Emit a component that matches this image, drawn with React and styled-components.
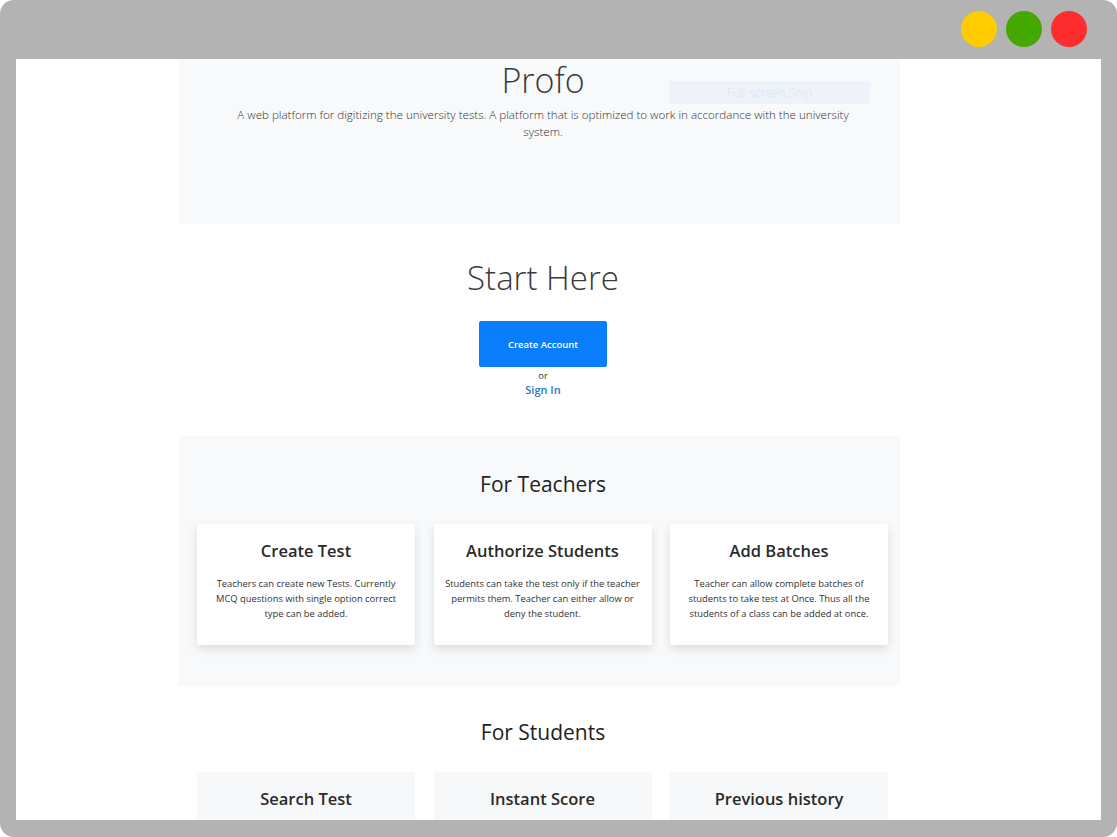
import React from "react";
import styled, { createGlobalStyle } from "styled-components";

const Global = createGlobalStyle`
  html, body { margin: 0; padding: 0; background: #ffffff; }
  body { font-family: "Open Sans", "Noto Sans", sans-serif; color: #212529; }
  * { box-sizing: border-box; }
`;

const Frame = styled.div`
  width: 1117px;
  height: 837px;
  background: #b3b3b3;
  border-radius: 14px;
  padding: 59px 16px 17px 16px;
  position: relative;
  display: flex;
`;

const Dots = styled.div`
  position: absolute;
  top: 11px;
  right: 30px;
  display: flex;
  gap: 9px;
`;

const Dot = styled.span`
  width: 36px;
  height: 36px;
  border-radius: 50%;
  background: ${(p) => p.$color};
`;

const Viewport = styled.div`
  flex: 1;
  background: #ffffff;
  overflow: hidden;
  padding-left: 163px;
`;

const Column = styled.div`
  width: 721px;
  display: flex;
  flex-direction: column;
`;

const Hero = styled.section`
  position: relative;
  background: #f8f9fa;
  height: 165px;
  display: flex;
  flex-direction: column;
  align-items: center;
  padding: 2px 11px 0 18px;
`;

const Title = styled.h1`
  margin: 0;
  font-weight: 300;
  font-size: 34px;
  line-height: 38px;
  color: #3a3a3a;
`;

const Lead = styled.p`
  margin: 7px 0 0;
  max-width: 630px;
  text-align: center;
  font-weight: 300;
  font-size: 11.6px;
  line-height: 17px;
  color: #333;
`;

const Snip = styled.div`
  position: absolute;
  left: 490px;
  top: 22px;
  width: 201px;
  height: 23px;
  background: #eef3fa;
  color: #d9e3f0;
  font-size: 12px;
  font-weight: 300;
  display: flex;
  align-items: center;
  justify-content: center;
`;

const Start = styled.section`
  height: 212px;
  display: flex;
  flex-direction: column;
  align-items: center;
  padding: 33px 11px 0 18px;
`;

const BigHeading = styled.h2`
  margin: 0;
  font-weight: 300;
  font-size: 33px;
  line-height: 42px;
  color: #3a3a3a;
`;

const PrimaryButton = styled.button`
  margin-top: 22px;
  width: 128px;
  height: 46px;
  border: none;
  border-radius: 2px;
  background: #0a7dfb;
  color: #ffffff;
  font-family: "Open Sans", "Noto Sans", sans-serif;
  font-size: 9.5px;
  font-weight: 600;
`;

const Or = styled.div`
  margin-top: 2px;
  font-size: 9.5px;
  line-height: 13px;
  color: #333;
`;

const SignIn = styled.a`
  font-size: 11px;
  line-height: 15px;
  font-weight: 600;
  color: #2a78c9;
  text-decoration: none;
`;

const FeatureSection = styled.section`
  background: ${(p) => (p.$gray ? "#f8f9fa" : "#ffffff")};
  height: ${(p) => p.$height}px;
  display: flex;
  flex-direction: column;
  align-items: center;
  padding: ${(p) => p.$top}px 11px 0 18px;
`;

const SectionHeading = styled.h3`
  margin: 0;
  font-weight: 400;
  font-size: 21px;
  line-height: 28px;
  color: #222;
`;

const CardRow = styled.div`
  margin-top: 26px;
  align-self: stretch;
  display: grid;
  grid-template-columns: repeat(3, 218px);
  column-gap: 18.5px;
`;

const Card = styled.div`
  background: ${(p) => (p.$muted ? "#f7f8f9" : "#ffffff")};
  height: 121px;
  border-radius: 2px;
  box-shadow: ${(p) => (p.$muted ? "none" : "0 4px 10px rgba(0,0,0,0.12)")};
  display: flex;
  flex-direction: column;
  align-items: center;
  padding: 14px 10px 0;
`;

const CardTitle = styled.h4`
  margin: 0;
  font-weight: 600;
  font-size: 16.5px;
  line-height: 26px;
  color: #2a2a2a;
`;

const CardText = styled.p`
  margin: 12px 0 0;
  text-align: center;
  font-size: 9.4px;
  line-height: 15px;
  color: #333;
`;

const teachers = [
  {
    title: "Create Test",
    text: "Teachers can create new Tests. Currently MCQ questions with single option correct type can be added.",
  },
  {
    title: "Authorize Students",
    text: "Students can take the test only if the teacher permits them. Teacher can either allow or deny the student.",
  },
  {
    title: "Add Batches",
    text: "Teacher can allow complete batches of students to take test at Once. Thus all the students of a class can be added at once.",
  },
];

const students = ["Search Test", "Instant Score", "Previous history"];

export default function App() {
  return (
    <>
      <Global />
      <Frame>
        <Dots>
          <Dot $color="#ffcc00" />
          <Dot $color="#44a800" />
          <Dot $color="#ff2d2d" />
        </Dots>
        <Viewport>
          <Column>
            <Hero>
              <Title>Profo</Title>
              <Lead>
                A web platform for digitizing the university tests. A platform that is optimized to work in accordance with the university system.
              </Lead>
              <Snip>Full-screen Snip</Snip>
            </Hero>
            <Start>
              <BigHeading>Start Here</BigHeading>
              <PrimaryButton>Create Account</PrimaryButton>
              <Or>or</Or>
              <SignIn href="#">Sign In</SignIn>
            </Start>
            <FeatureSection $gray $height={250} $top={34}>
              <SectionHeading>For Teachers</SectionHeading>
              <CardRow>
                {teachers.map((c) => (
                  <Card key={c.title}>
                    <CardTitle>{c.title}</CardTitle>
                    <CardText>{c.text}</CardText>
                  </Card>
                ))}
              </CardRow>
            </FeatureSection>
            <FeatureSection $height={250} $top={32}>
              <SectionHeading>For Students</SectionHeading>
              <CardRow>
                {students.map((t) => (
                  <Card key={t} $muted>
                    <CardTitle>{t}</CardTitle>
                  </Card>
                ))}
              </CardRow>
            </FeatureSection>
          </Column>
        </Viewport>
      </Frame>
    </>
  );
}
